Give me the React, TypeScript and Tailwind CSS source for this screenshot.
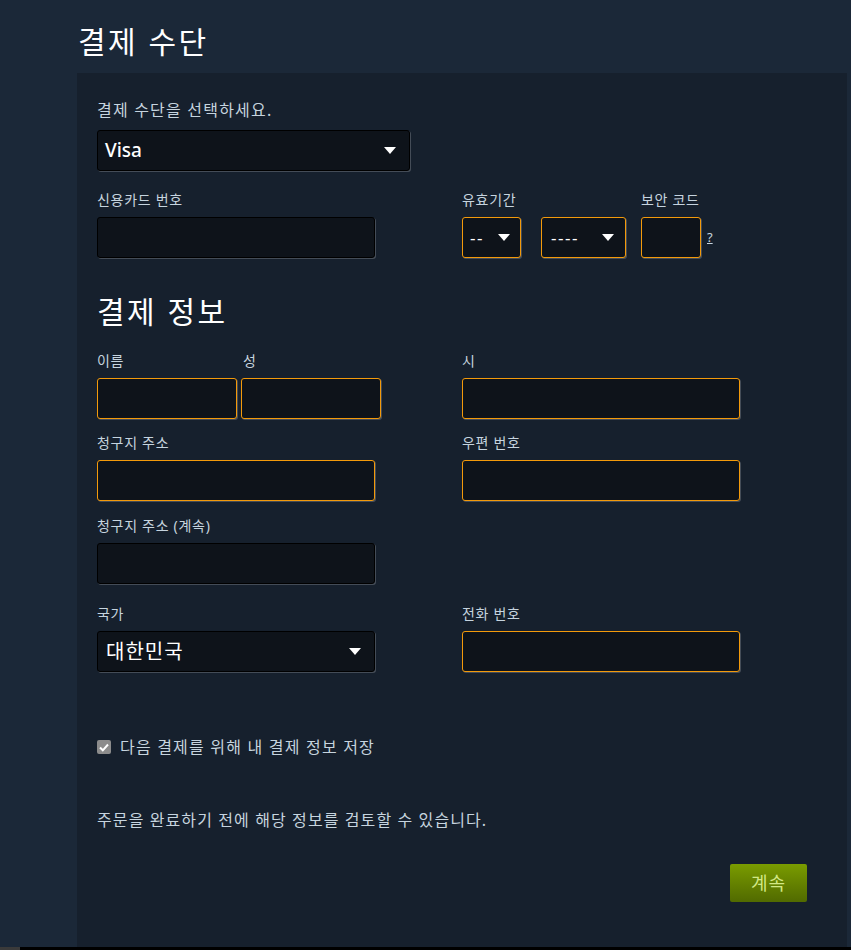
import React from 'react';

const font = { fontFamily: '"Noto Sans", "Noto Sans CJK KR", sans-serif' };

const Arrow: React.FC = () => (
  <svg width="12" height="7" viewBox="0 0 12 7" className="shrink-0">
    <path d="M0 0 L12 0 L6 7 Z" fill="#ffffff" />
  </svg>
);

interface BoxProps {
  width: string;
  orange?: boolean;
  children?: React.ReactNode;
  className?: string;
}

const Box: React.FC<BoxProps> = ({ width, orange, children, className = '' }) => (
  <div
    className={`${width} h-[41px] rounded-[3px] bg-[#0e131a] border shadow-[1px_1px_0_rgba(255,255,255,0.2)] flex items-center ${
      orange ? 'border-[#f39a0b]' : 'border-black'
    } ${className}`}
  >
    {children}
  </div>
);

const Label: React.FC<{ children: React.ReactNode }> = ({ children }) => (
  <div className="text-[14px] leading-[16px] tracking-[0.7px] mb-[9px] text-[#c6d4df] whitespace-nowrap">{children}</div>
);

export default function App() {
  return (
    <div className="min-h-[950px] bg-[#1b2838] flex flex-col" style={font}>
      <div className="ml-[77px] w-[770px] flex-1 flex flex-col">
        <h1 className="h-[73px] pt-[24px] pl-[1px] text-[30px] leading-[36px] tracking-[2.5px] text-white font-normal">결제 수단</h1>

        <div className="flex-1 bg-[#16202d] px-[20px] pt-[27px] pb-[40px]">
          <div className="text-[16px] leading-[20px] tracking-[1.2px] text-[#c6d4df] mb-[10px]">결제 수단을 선택하세요.</div>
          <Box width="w-[313px]" className="justify-between pl-[7px] pr-[13px]">
            <span className="text-[19px] font-medium text-white">Visa</span>
            <Arrow />
          </Box>

          {/* card row */}
          <div className="grid grid-cols-[365px_1fr] mt-[21px]">
            <div>
              <Label>신용카드 번호</Label>
              <Box width="w-[278px]" />
            </div>
            <div className="flex gap-[15px]">
              <div>
                <Label>유효기간</Label>
                <div className="flex gap-[20px]">
                  <Box width="w-[59px]" orange className="justify-between pl-[7px] pr-[10px]">
                    <span className="text-[17px] text-white tracking-[1.5px]">--</span>
                    <Arrow />
                  </Box>
                  <Box width="w-[85px]" orange className="justify-between pl-[9px] pr-[11px]">
                    <span className="text-[17px] text-white tracking-[1.5px]">----</span>
                    <Arrow />
                  </Box>
                </div>
              </div>
              <div>
                <Label>보안 코드</Label>
                <div className="flex items-center gap-[6px]">
                  <Box width="w-[60px]" orange />
                  <span className="text-[13px] text-[#c6d4df] underline">?</span>
                </div>
              </div>
            </div>
          </div>

          <h2 className="mt-[36px] text-[30px] leading-[36px] tracking-[2.5px] text-white font-normal">결제 정보</h2>

          <div className="grid grid-cols-[365px_1fr] mt-[23px] gap-y-[16px]">
            <div className="flex gap-[4px]">
              <div>
                <Label>이름</Label>
                <Box width="w-[140px]" orange />
              </div>
              <div>
                <Label><span className="pl-[2px]">성</span></Label>
                <Box width="w-[140px]" orange />
              </div>
            </div>
            <div>
              <Label>시</Label>
              <Box width="w-[278px]" orange />
            </div>

            <div>
              <Label>청구지 주소</Label>
              <Box width="w-[278px]" orange />
            </div>
            <div>
              <Label>우편 번호</Label>
              <Box width="w-[278px]" orange />
            </div>

            <div className="mt-[1px]">
              <Label>청구지 주소 (계속)</Label>
              <Box width="w-[278px]" />
            </div>
            <div />

            <div className="mt-[6px]">
              <Label>국가</Label>
              <Box width="w-[278px]" className="justify-between pl-[8px] pr-[13px]">
                <span className="text-[20px] tracking-[1px] text-white">대한민국</span>
                <Arrow />
              </Box>
            </div>
            <div className="mt-[6px]">
              <Label>전화 번호</Label>
              <Box width="w-[278px]" orange />
            </div>
          </div>

          <label className="mt-[65px] flex items-center gap-[9px]">
            <span className="w-[14px] h-[14px] rounded-[2px] bg-[#8c8c8c] flex items-center justify-center">
              <svg width="10" height="9" viewBox="0 0 10 9">
                <path d="M1 4.5 L3.8 7.3 L9 1.5" stroke="#ffffff" strokeWidth="2" fill="none" />
              </svg>
            </span>
            <span className="text-[16px] leading-[20px] tracking-[1.2px] text-[#c6d4df]">다음 결제를 위해 내 결제 정보 저장</span>
          </label>

          <p className="mt-[53px] text-[16px] leading-[20px] tracking-[1.1px] text-[#c6d4df]">
            주문을 완료하기 전에 해당 정보를 검토할 수 있습니다.
          </p>

          <div className="flex justify-end pr-[20px] mt-[34px]">
            <button className="w-[77px] h-[38px] rounded-[2px] bg-gradient-to-b from-[#7a9c00] to-[#516a00] text-[18px] tracking-[1px] text-[#d2e885]">
              계속
            </button>
          </div>
        </div>
      </div>
      <div className="h-[3px] bg-black">
        <div className="w-[20px] h-full bg-[#3a3a3a]" />
      </div>
    </div>
  );
}
